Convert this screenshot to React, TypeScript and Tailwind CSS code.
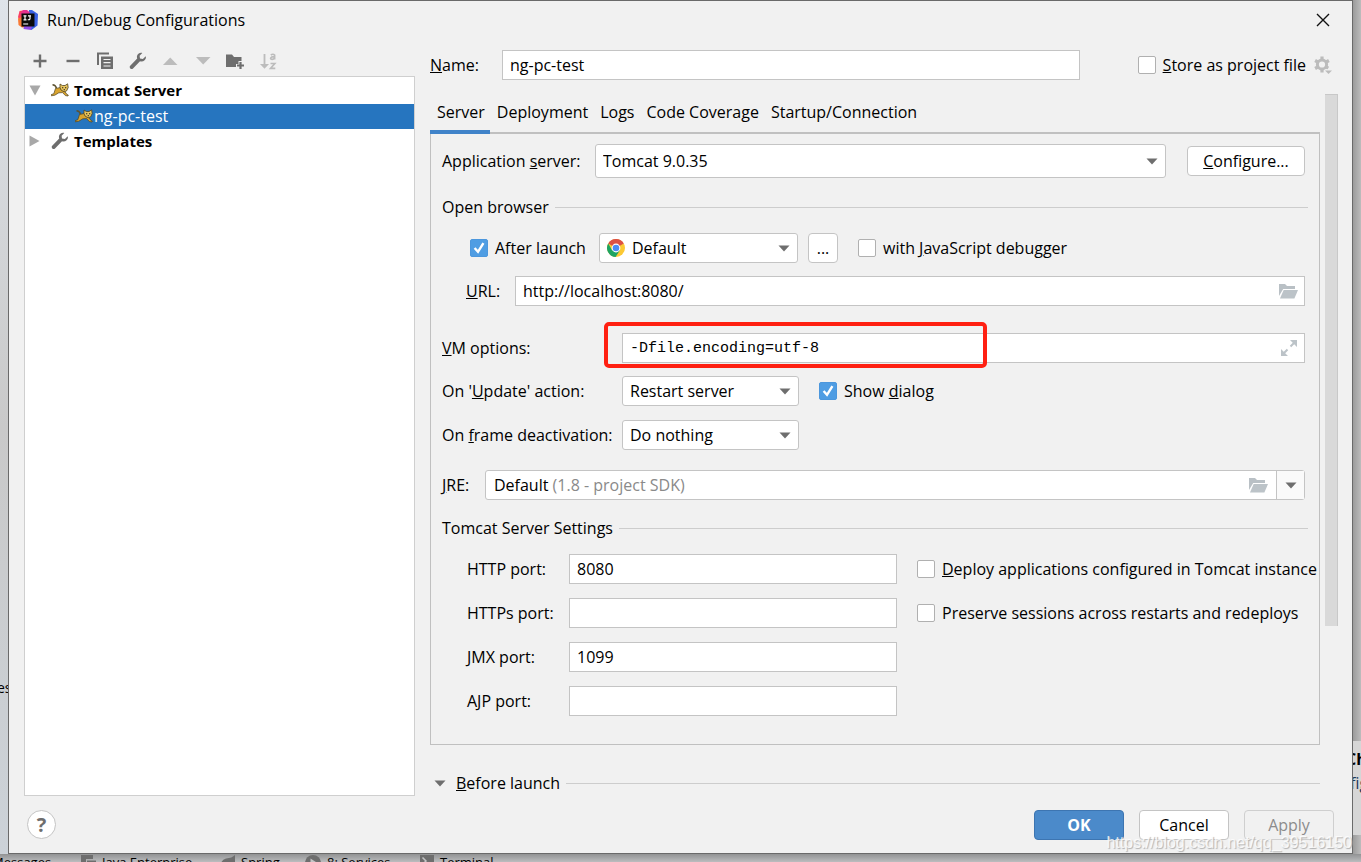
import { useState } from "react";
import type { ReactNode } from "react";
import clsx from "clsx";

interface CheckFieldProps {
  id: string;
  defaultChecked?: boolean;
  className?: string;
  children: ReactNode;
}

function CheckField({ id, defaultChecked, className, children }: CheckFieldProps) {
  return (
    <div className={clsx("flex shrink-0 items-center gap-[7px]", className)}>
      <span className="relative flex h-[18px] w-[18px]">
        <input
          id={id}
          type="checkbox"
          defaultChecked={defaultChecked}
          className="peer h-[18px] w-[18px] appearance-none rounded-[2px] border border-[#b0b0b0] bg-white checked:border-[#4c97dd] checked:bg-[#4f9de3]"
        />
        <svg
          viewBox="0 0 18 18"
          className="pointer-events-none absolute inset-0 hidden h-[18px] w-[18px] peer-checked:block"
        >
          <path d="M4.6 9 8 12.8 13.4 4.2" fill="none" stroke="#fff" strokeWidth="2.4" />
        </svg>
      </span>
      <label htmlFor={id} className="whitespace-nowrap">
        {children}
      </label>
    </div>
  );
}

function Arrow({ className }: { className?: string }) {
  return (
    <svg viewBox="0 0 12 7" className={clsx("h-[7px] w-3", className)}>
      <path d="M.5.500h11L6 6.500z" fill="#6e6e6e" />
    </svg>
  );
}

interface SelectFieldProps {
  id: string;
  value: string;
  label?: string;
  icon?: ReactNode;
  className?: string;
}

function SelectField({ id, value, label, icon, className }: SelectFieldProps) {
  return (
    <div className={clsx("relative", className)}>
      <select
        id={id}
        aria-label={label}
        className={clsx(
          "h-full w-full appearance-none rounded-[3px] border border-[#c4c4c4] bg-white pr-7 text-black",
          icon ? "pl-8" : "pl-[7px]"
        )}
      >
        <option>{value}</option>
      </select>
      {icon && (
        <span className="pointer-events-none absolute inset-y-0 left-2 flex items-center">{icon}</span>
      )}
      <span className="pointer-events-none absolute inset-y-0 right-2 flex items-center">
        <Arrow />
      </span>
    </div>
  );
}

function SectionTitle({ children, className }: { children: ReactNode; className?: string }) {
  return (
    <div className={clsx("flex h-6 items-center gap-[6px]", className)}>
      <h2 className="whitespace-nowrap">{children}</h2>
      <span className="h-px flex-1 bg-[#cdcdcd]" />
    </div>
  );
}

function IdeaLogo() {
  return (
    <svg viewBox="0 0 20 20" className="h-5 w-5">
      <path d="M1.500 1 8 0l4 4-6 12-5-1.500.500-3.500L0 7z" fill="#fb3f62" />
      <path d="M0 8.500 6 6l3 11-5 .500-3.500-2.500z" fill="#f97a35" />
      <path d="M11 0h3l6 4-.500 11.500L13.500 20 8 17l3-13z" fill="#3a62e4" />
      <path d="M5 0h4l3 2.500L7 7 2 4z" fill="#e5308f" />
      <path d="M6 16h8l-1 4-7.500-1z" fill="#8f4ce8" />
      <path d="M3.500 3.500h13v13h-13z" fill="#0a0a0a" />
      <path
        d="M5.500 5.800h3M7 5.800v4M5.500 9.800h3M10 5.800h3M12 5.800v3q0 1.100-2.200.900"
        fill="none"
        stroke="#fff"
        strokeWidth="1.200"
      />
      <path d="M5.200 14h5" stroke="#ddd" strokeWidth="1.200" />
    </svg>
  );
}

function TomcatIcon() {
  return (
    <svg viewBox="0 0 18 14" className="h-[14px] w-[18px]">
      <path d="M1.500 1.800q3 .200 4 3.400" fill="none" stroke="#5c5230" strokeWidth="1.400" />
      <path
        d="M4.500 5.500 9.500 4.500l4 3.500 2.500 3.500 1.300.600-.300.900-2.600-.400-2.800-3-3.800.200-4 2.400-3.500.600-.200-1.100 2.700-1z"
        fill="#d9a42e"
        stroke="#4f4220"
        strokeWidth=".700"
      />
      <path
        d="M9 1 11.300 2.500h2.800L16.600.800l.600 3.700-1.600 3.400-2.500.900-3.100-1.800-1-2.500z"
        fill="#e9c55c"
        stroke="#4f4220"
        strokeWidth=".800"
      />
      <path d="M11 4.700h1.300M14 4.700h1.300M12.600 6.700h1.400" stroke="#222" strokeWidth="1.100" />
    </svg>
  );
}

function WrenchIcon() {
  return (
    <svg viewBox="0 0 18 18" className="h-[18px] w-[18px]">
      <path
        d="M16.700 4.200 13.900 7 11 6.500 10.600 3.700 13.300.900C10.800.200 8.500 1.800 8 4c-.200 1 0 1.800.200 2.600L1.200 13.700c-1.600 1.800 1 4.400 2.800 2.800l7-7.200c3.300 1.100 6.900-1.800 5.700-5.100z"
        fill="#6e6e6e"
      />
    </svg>
  );
}

function FolderIcon() {
  return (
    <svg viewBox="0 0 19 15" className="h-[15px] w-[19px]">
      <path d="M0 12V0h6l2 2h8v3H4.200z" fill="#b9c0c5" />
      <path d="M4.700 6H19l-3.600 8.500H1z" fill="#bcc3c8" />
    </svg>
  );
}

function ChromeIcon() {
  return (
    <svg viewBox="0 0 18 18" className="h-[18px] w-[18px]">
      <circle cx="9" cy="9" r="9" fill="#fcc934" />
      <path d="M9 9 1.200 4.500A9 9 0 0 1 16.800 4.500z" fill="#dd5144" />
      <path d="M1.200 4.500A9 9 0 0 0 8.600 18l4.300-6.700L9 9 5.100 11.200z" fill="#1da462" />
      <circle cx="9" cy="9" r="4.400" fill="#fff" />
      <circle cx="9" cy="9" r="3.300" fill="#4c8bf5" />
    </svg>
  );
}

const toolbar: { label: string; icon: ReactNode }[] = [
  { label: "Add", icon: <path d="M2.500 9h13M9 2.500v13" stroke="#6e6e6e" strokeWidth="2.400" /> },
  { label: "Remove", icon: <path d="M2.500 9h13" stroke="#6e6e6e" strokeWidth="2.400" /> },
  {
    label: "Copy",
    icon: (
      <>
        <path d="M2 13V1.500h11" fill="none" stroke="#6e6e6e" strokeWidth="2" />
        <path d="M5 4.500h12V17H5z" fill="#6e6e6e" />
        <path d="M7.500 7.500h7M7.500 10.700h7M7.500 14h7" stroke="#f1f1f1" strokeWidth="1.200" />
      </>
    )
  },
  { label: "Edit templates", icon: <WrenchIcon /> },
  { label: "Move up", icon: <path d="M2 13h14.500L9.200 5.500z" fill="#bcbcbc" /> },
  { label: "Move down", icon: <path d="M2 5h14.500l-7.300 7.500z" fill="#bcbcbc" /> },
  {
    label: "Create folder",
    icon: (
      <>
        <path d="M0 2.500h6l2 2.500h7.500v4h-3v3H10v3H0z" fill="#6e6e6e" />
        <path d="M11 13.500h7M14.500 10v7" stroke="#6e6e6e" strokeWidth="2.200" />
      </>
    )
  },
  {
    label: "Sort",
    icon: (
      <>
        <path d="M5.500 2v12" stroke="#bcbcbc" strokeWidth="1.800" />
        <path d="M1 12h9l-4.500 4.800z" fill="#bcbcbc" />
        <path
          d="M11.800 3q2.200-1.500 3.800 0v4.500M15.600 4.600c-4.800-.200-4.800 2.900-2.400 2.800q1.500 0 2.400-1.300M11.500 11.500h4.300l-4.200 4.800h4.700"
          fill="none"
          stroke="#bcbcbc"
          strokeWidth="1.700"
        />
      </>
    )
  }
];

const tabs = ["Server", "Deployment", "Logs", "Code Coverage", "Startup/Connection"];

const ports = [
  { id: "http", label: "HTTP port:", value: "8080" },
  { id: "https", label: "HTTPs port:", value: "" },
  { id: "jmx", label: "JMX port:", value: "1099" },
  { id: "ajp", label: "AJP port:", value: "" }
];

const inputClass = "h-[30px] min-w-0 border border-[#c4c4c4] bg-white px-[7px] text-black";

function ConfigTree() {
  return (
    <aside className="flex w-[391px] shrink-0 flex-col">
      <div className="flex h-[37px] w-[253px] items-center justify-between pt-[7px] pl-[7px]">
        {toolbar.map((item) => (
          <button key={item.label} aria-label={item.label} className="h-[18px] w-[18px]">
            <svg viewBox="0 0 18 18" className="h-[18px] w-[18px]">
              {item.icon}
            </svg>
          </button>
        ))}
      </div>
      <ul className="flex-1 border border-[#cfcfcf] bg-white pt-px">
        <li>
          <div className="flex h-[26px] items-center pb-[2px] pl-1 text-[15px] font-bold">
            <svg viewBox="0 0 12 11" className="mr-[10px] h-[11px] w-3">
              <path d="M.500.500h11L6 10.500z" fill="#a8a8a8" />
            </svg>
            <TomcatIcon />
            <span className="ml-[5px]">Tomcat Server</span>
          </div>
          <ul>
            <li className="flex h-[25px] items-center bg-[#2675bf] pb-[2px] pl-[50px] text-white">
              <TomcatIcon />
              <span className="ml-px">ng-pc-test</span>
            </li>
          </ul>
        </li>
        <li className="flex h-[25px] items-center pb-[2px] pl-1 text-[15px] font-bold">
          <svg viewBox="0 0 11 12" className="mr-[11px] h-3 w-[11px]">
            <path d="M.500.500v11l10-5.500z" fill="#a8a8a8" />
          </svg>
          <WrenchIcon />
          <span className="ml-[5px]">Templates</span>
        </li>
      </ul>
    </aside>
  );
}

function ServerPanel() {
  return (
    <div className="border-x border-b border-[#c0c0c0] pt-[10px] pr-[14px] pb-7 pl-[11px]">
      <div className="flex items-center">
        <label htmlFor="server" className="w-[153px] shrink-0">
          Application <u>s</u>erver:
        </label>
        <SelectField id="server" value="Tomcat 9.0.35" className="h-[34px] flex-1" />
        <button className="ml-[21px] h-[30px] w-[118px] shrink-0 rounded-[4px] border border-[#c4c4c4] bg-white">
          <u>C</u>onfigure...
        </button>
      </div>

      <SectionTitle className="-mr-[3px] mt-[17px]">Open browser</SectionTitle>
      <div className="mt-[14px] flex items-center pl-7">
        <CheckField id="after-launch" defaultChecked className="w-[129px]">
          After launch
        </CheckField>
        <SelectField
          id="browser"
          label="Browser"
          value="Default"
          icon={<ChromeIcon />}
          className="h-[30px] w-[199px]"
        />
        <button className="ml-[10px] h-[30px] w-[30px] rounded-[4px] border border-[#c4c4c4] bg-white">
          ...
        </button>
        <CheckField id="debugger" className="ml-5">
          with <u>J</u>avaScript debugger
        </CheckField>
      </div>
      <div className="mt-[13px] flex items-center pl-6">
        <label htmlFor="url" className="w-[49px] shrink-0">
          <u>U</u>RL:
        </label>
        <div className="relative flex flex-1">
          <input id="url" defaultValue="http://localhost:8080/" className={clsx(inputClass, "flex-1")} />
          <button aria-label="Browse" className="absolute inset-y-0 right-[7px]">
            <FolderIcon />
          </button>
        </div>
      </div>

      <div className="mt-[27px] flex items-center">
        <label htmlFor="vm" className="w-[180px] shrink-0">
          <u>V</u>M options:
        </label>
        <div className="relative flex flex-1">
          <input
            id="vm"
            defaultValue="-Dfile.encoding=utf-8"
            className={clsx(inputClass, "flex-1 font-['Liberation_Mono',monospace] text-[15px]")}
          />
          <button aria-label="Expand" className="absolute inset-y-0 right-2">
            <svg viewBox="0 0 16 16" className="h-4 w-4">
              <path d="M9 0h7v7zM0 9v7h7z" fill="#bcc3c8" />
              <path d="M9.500 6.500 13 3M6.500 9.500 3 13" stroke="#bcc3c8" strokeWidth="2" />
            </svg>
          </button>
          <span className="pointer-events-none absolute -top-[11px] -left-[18px] h-[46px] w-[383px] rounded-[5px] border-4 border-[#ff2012]" />
        </div>
      </div>
      <div className="mt-[13px] flex items-center">
        <label htmlFor="update" className="w-[180px] shrink-0">
          On '<u>U</u>pdate' action:
        </label>
        <SelectField id="update" value="Restart server" className="h-[30px] w-[177px]" />
        <CheckField id="show-dialog" defaultChecked className="ml-5">
          Show <u>d</u>ialog
        </CheckField>
      </div>
      <div className="mt-[14px] flex items-center">
        <label htmlFor="frame" className="w-[180px] shrink-0">
          On <u>f</u>rame deactivation:
        </label>
        <SelectField id="frame" value="Do nothing" className="h-[30px] w-[177px]" />
      </div>
      <div className="mt-5 flex items-center">
        <label htmlFor="jre" className="w-[43px] shrink-0">
          <u>J</u>RE:
        </label>
        <div className="flex h-[30px] flex-1 rounded-[3px] border border-[#c4c4c4] bg-white">
          <button id="jre" aria-haspopup="listbox" className="flex-1 pl-2 text-left">
            Default <span className="text-[#8a8a8a]">(1.8 - project SDK)</span>
          </button>
          <button aria-label="Browse JRE" className="px-2">
            <FolderIcon />
          </button>
          <button
            aria-label="Show JRE list"
            className="flex w-7 items-center justify-center border-l border-[#c4c4c4] bg-[#fafafa]"
          >
            <Arrow />
          </button>
        </div>
      </div>

      <SectionTitle className="-mr-[3px] mt-4">Tomcat Server Settings</SectionTitle>
      <div className="mt-[14px] flex pl-[25px]">
        <div className="flex flex-col gap-[14px]">
          {ports.map((port) => (
            <div key={port.id} className="flex items-center">
              <label htmlFor={port.id} className="w-[102px] shrink-0">
                {port.label}
              </label>
              <input id={port.id} defaultValue={port.value} className={clsx(inputClass, "w-[328px]")} />
            </div>
          ))}
        </div>
        <div className="ml-5 flex w-0 flex-1 flex-col gap-[14px]">
          <CheckField id="deploy" className="h-[30px]">
            <u>D</u>eploy applications configured in Tomcat instance
          </CheckField>
          <CheckField id="sessions" className="h-[30px]">
            Preserve sessions across restarts and redeploys
          </CheckField>
        </div>
      </div>
    </div>
  );
}

function ConfigForm() {
  const [activeTab, setActiveTab] = useState("Server");

  return (
    <main className="ml-[15px] min-w-0 flex-1 pt-[11px]">
      <div className="flex items-center pr-[6px]">
        <label htmlFor="name" className="w-[72px] shrink-0">
          <u>N</u>ame:
        </label>
        <input id="name" defaultValue="ng-pc-test" className={clsx(inputClass, "flex-1")} />
        <CheckField id="store" className="ml-[58px]">
          <u>S</u>tore as project file
        </CheckField>
        <button aria-label="Storage settings" className="ml-2 h-[18px] w-[18px]">
          <svg viewBox="0 0 18 18" className="h-[18px] w-[18px]">
            <circle cx="8" cy="8.500" r="4.600" fill="none" stroke="#bcbcbc" strokeWidth="3" />
            <path
              d="M8 .500v3M8 13.500v3M1.100 4.500l2.600 1.500M12.300 11l2 1.100M1.100 12.500 3.700 11M12.300 6l2.600-1.500"
              stroke="#bcbcbc"
              strokeWidth="3.200"
            />
            <path d="M10.500 13.500H18v4.500h-7.500z" fill="#f1f1f1" />
            <path d="M11 14.500h7L14.500 18z" fill="#bcbcbc" />
          </svg>
        </button>
      </div>

      <div className="mt-[14px] flex">
        <div className="min-w-0 flex-1">
          <div role="tablist" className="flex h-10 border-b-2 border-[#c0c0c0]">
            {tabs.map((tab) => (
              <button
                key={tab}
                role="tab"
                aria-selected={activeTab === tab}
                onClick={() => setActiveTab(tab)}
                className={clsx(
                  "-mb-[2px] border-b-4 pr-[5px] pl-[7px] whitespace-nowrap",
                  activeTab === tab ? "border-[#4083c9]" : "border-transparent"
                )}
              >
                {tab}
              </button>
            ))}
          </div>
          <ServerPanel />
          <div className="mt-[26px] flex items-center">
            <Arrow className="mr-[10px] ml-1" />
            <SectionTitle className="flex-1">
              <u>B</u>efore launch
            </SectionTitle>
          </div>
        </div>
        <div className="ml-[5px] h-[532px] w-[13px] border-t border-r border-[#c8c8c8] bg-[#d9d9d9]" />
      </div>
    </main>
  );
}

function ToolWindowBar() {
  return (
    <div className="flex h-2 items-start overflow-hidden bg-linear-to-b from-[#929394] to-[#bcbdbf] text-[13px] leading-4 whitespace-nowrap">
      <span className="-ml-2 w-[89px]">Messages</span>
      <svg viewBox="0 0 15 14" className="mt-px mr-[6px] h-[14px] w-[15px] shrink-0">
        <path d="M0 0h12v4H5v9H0z" fill="#6e6e6e" />
        <path d="M6 5.500h9V14H6z" fill="#6e6e6e" />
      </svg>
      <span className="w-[118px]">Java Enterprise</span>
      <svg viewBox="0 0 15 14" className="mt-px mr-[6px] h-[14px] w-[15px] shrink-0">
        <path d="M15 0v8q-2 6-9 5.500L0 14q0-9 6-10.500Q12 3 15 0z" fill="#6e6e6e" />
      </svg>
      <span className="w-[64px]">Spring</span>
      <svg viewBox="0 0 16 16" className="mt-px mr-[6px] h-4 w-4 shrink-0">
        <circle cx="8" cy="8" r="8" fill="#6e6e6e" />
        <path d="M5.500 3.500v9l7-4.500z" fill="#c4c5c6" />
      </svg>
      <span className="w-[93px]">8: Services</span>
      <svg viewBox="0 0 14 14" className="mt-px mr-[6px] h-[14px] w-[14px] shrink-0">
        <path d="M0 0h14v14H0z" fill="#6e6e6e" />
        <path d="M2.500 2.500 6 6 2.500 9.500" fill="none" stroke="#c4c5c6" strokeWidth="1.500" />
      </svg>
      <span>Terminal</span>
    </div>
  );
}

export default function App() {
  return (
    <div className="flex min-h-screen flex-col overflow-hidden bg-[#b9babc] font-['Open_Sans','Noto_Sans',sans-serif] text-[16px] leading-6 text-black">
      <div className="flex flex-1">
        <div className="w-2 shrink-0 overflow-hidden bg-linear-to-b from-[#dfe4ea] via-[#c9c9c9] to-[#ccd2d8]">
          <p className="mt-[676px] -ml-[3px] text-[14px]">es</p>
        </div>
        <div
          role="dialog"
          aria-labelledby="title"
          className="relative flex min-w-0 flex-1 flex-col border border-[#6a6a6a] bg-[#f1f1f1]"
        >
          <header className="flex h-[37px] items-center pr-[22px] pl-[9px]">
            <IdeaLogo />
            <h1 id="title" className="ml-[9px]">
              Run/Debug Configurations
            </h1>
            <button aria-label="Close" className="ml-auto">
              <svg viewBox="0 0 14 14" className="h-[14px] w-[14px]">
                <path d="M1 1l12 12M13 1 1 13" stroke="#111" strokeWidth="1.400" />
              </svg>
            </button>
          </header>
          <div className="flex flex-1 pt-px pr-[14px] pl-[15px]">
            <ConfigTree />
            <ConfigForm />
          </div>
          <footer className="flex h-[57px] items-center gap-[15px] pr-[18px] pl-[18px]">
            <button
              aria-label="Help"
              className="mr-auto flex h-[29px] w-[29px] items-center justify-center rounded-full border border-[#c4c4c4] bg-white text-[20px] font-bold text-[#6e6e6e]"
            >
              ?
            </button>
            <button className="h-[30px] w-[90px] rounded-[4px] border border-[#3d75b1] bg-[#4b8aca] font-bold text-white">
              OK
            </button>
            <button className="h-[30px] w-[90px] rounded-[4px] border border-[#c4c4c4] bg-white">Cancel</button>
            <button
              disabled
              className="h-[30px] w-[90px] rounded-[4px] border border-[#cfcfcf] text-[#8c8c8c]"
            >
              Apply
            </button>
          </footer>
          <p className="pointer-events-none absolute right-0 bottom-0 font-['Liberation_Sans',sans-serif] text-[16px] leading-5 text-white/80 [text-shadow:1px_1px_1px_#b0b0b0]">
            https://blog.csdn.net/qq_39516150
          </p>
        </div>
        <div className="w-2 shrink-0 overflow-hidden bg-linear-to-r from-[#9c9c9c] to-[#bcbcbc]">
          <div className="mt-[741px] h-[94px] bg-[#d6d6d6] pt-[6px]">
            <p className="-ml-[7px] font-bold">Ch</p>
            <p className="-ml-[3px] text-[#1d3a5c]">fig</p>
          </div>
        </div>
      </div>
      <ToolWindowBar />
    </div>
  );
}
